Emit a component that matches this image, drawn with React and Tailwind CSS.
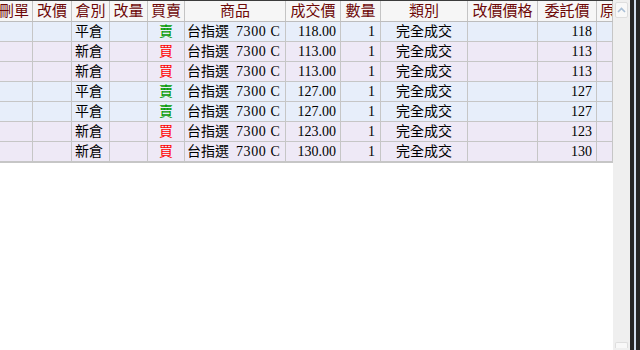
import React from "react";

const cols = [
  { key: "del", title: "刪單", w: "w-[33px]", head: "justify-end pr-[3px]" },
  { key: "chg", title: "改價", w: "w-[39px]", head: "justify-center" },
  { key: "pos", title: "倉別", w: "w-[38px]", head: "justify-center", cell: "justify-start pl-[3px]" },
  { key: "qty", title: "改量", w: "w-[38px]", head: "justify-center" },
  { key: "side", title: "買賣", w: "w-[37px]", head: "justify-center", cell: "justify-center" },
  { key: "prod", title: "商品", w: "w-[101px]", head: "justify-center", cell: "justify-start pl-[2px]" },
  { key: "price", title: "成交價", w: "w-[55px]", head: "justify-center", cell: "justify-end pr-[4px]" },
  { key: "num", title: "數量", w: "w-[40px]", head: "justify-center", cell: "justify-end pr-[5px]" },
  { key: "type", title: "類別", w: "w-[87px]", head: "justify-center", cell: "justify-center" },
  { key: "newp", title: "改價價格", w: "w-[70px]", head: "justify-center" },
  { key: "order", title: "委託價", w: "w-[59px]", head: "justify-center", cell: "justify-end pr-[4px]" },
  { key: "orig", title: "原", w: "w-[16px]", head: "justify-start pl-[3px]" },
];

const rows = [
  { pos: "平倉", side: "賣", price: "118.00", order: "118" },
  { pos: "新倉", side: "買", price: "113.00", order: "113" },
  { pos: "新倉", side: "買", price: "113.00", order: "113" },
  { pos: "平倉", side: "賣", price: "127.00", order: "127" },
  { pos: "平倉", side: "賣", price: "127.00", order: "127" },
  { pos: "新倉", side: "買", price: "123.00", order: "123" },
  { pos: "新倉", side: "買", price: "130.00", order: "130" },
];

function cellValue(row, key) {
  switch (key) {
    case "pos":
      return row.pos;
    case "side":
      return (
        <span className={row.side === "賣" ? "text-[#009a00]" : "text-[#ff0000]"}>
          {row.side}
        </span>
      );
    case "prod":
      return (
        <span className="whitespace-pre">
          台指選<span className="ml-[7px] tracking-[0.6px]">7300 C</span>
        </span>
      );
    case "price":
      return row.price;
    case "num":
      return "1";
    case "type":
      return "完全成交";
    case "order":
      return row.order;
    default:
      return "";
  }
}

export default function App() {
  return (
    <div
      className="w-[640px] h-[350px] flex bg-[#262626] overflow-hidden text-[14px] text-black"
      style={{ fontFamily: '"Liberation Serif", "Noto Sans CJK TC", serif' }}
    >
      {/* grid area */}
      <div className="w-[613px] shrink-0 h-full overflow-hidden bg-white">
        <div className="flex h-[22px] border-t border-t-[#3c3c3c] border-b border-b-[#bdbdbd] bg-[#f6f6f6]">
          {cols.map((c) => (
            <div
              key={c.key}
              className={`${c.w} shrink-0 flex items-center overflow-hidden whitespace-nowrap border-r border-r-[#c4c4c4] text-[15px] text-[#6e0808] leading-[20px] ${c.head}`}
            >
              {c.title}
            </div>
          ))}
        </div>
        {rows.map((r, i) => (
          <div
            key={i}
            className={`flex ${i === rows.length - 1 ? "h-[21px] border-b-2" : "h-[20px] border-b"} border-b-[#c6c6c6] ${
              r.side === "賣" ? "bg-[#e7eefa]" : "bg-[#eee9f6]"
            }`}
          >
            {cols.map((c) => (
              <div
                key={c.key}
                className={`${c.w} shrink-0 flex items-center overflow-hidden whitespace-nowrap border-r border-r-[#c6c6c6] leading-[19px] ${c.cell || ""}`}
              >
                {cellValue(r, c.key)}
              </div>
            ))}
          </div>
        ))}
      </div>

      {/* vertical scrollbar */}
      <div className="w-[17px] shrink-0 h-full flex flex-col justify-between bg-[#efefef] py-[2px] pl-[2px]">
        <div className="w-[13px] h-[16px] flex items-center justify-center rounded-[2px] bg-[#f8f8f8] border border-[#dedede]">
          <svg width="9" height="6" viewBox="0 0 9 6">
            <path d="M1 5 L4.5 1.5 L8 5" fill="none" stroke="#a9bfd6" strokeWidth="1.6" />
          </svg>
        </div>
        <div className="w-[13px] h-[6px] rounded-t-[2px] bg-[#f8f8f8] border border-b-0 border-[#dedede]" />
      </div>

      {/* window frame: dark outer background shows here */}
      <div className="w-[10px] shrink-0 h-full flex pl-[4px]">
        <div className="w-[2px] h-full bg-[#cfdcec]" />
      </div>
    </div>
  );
}
